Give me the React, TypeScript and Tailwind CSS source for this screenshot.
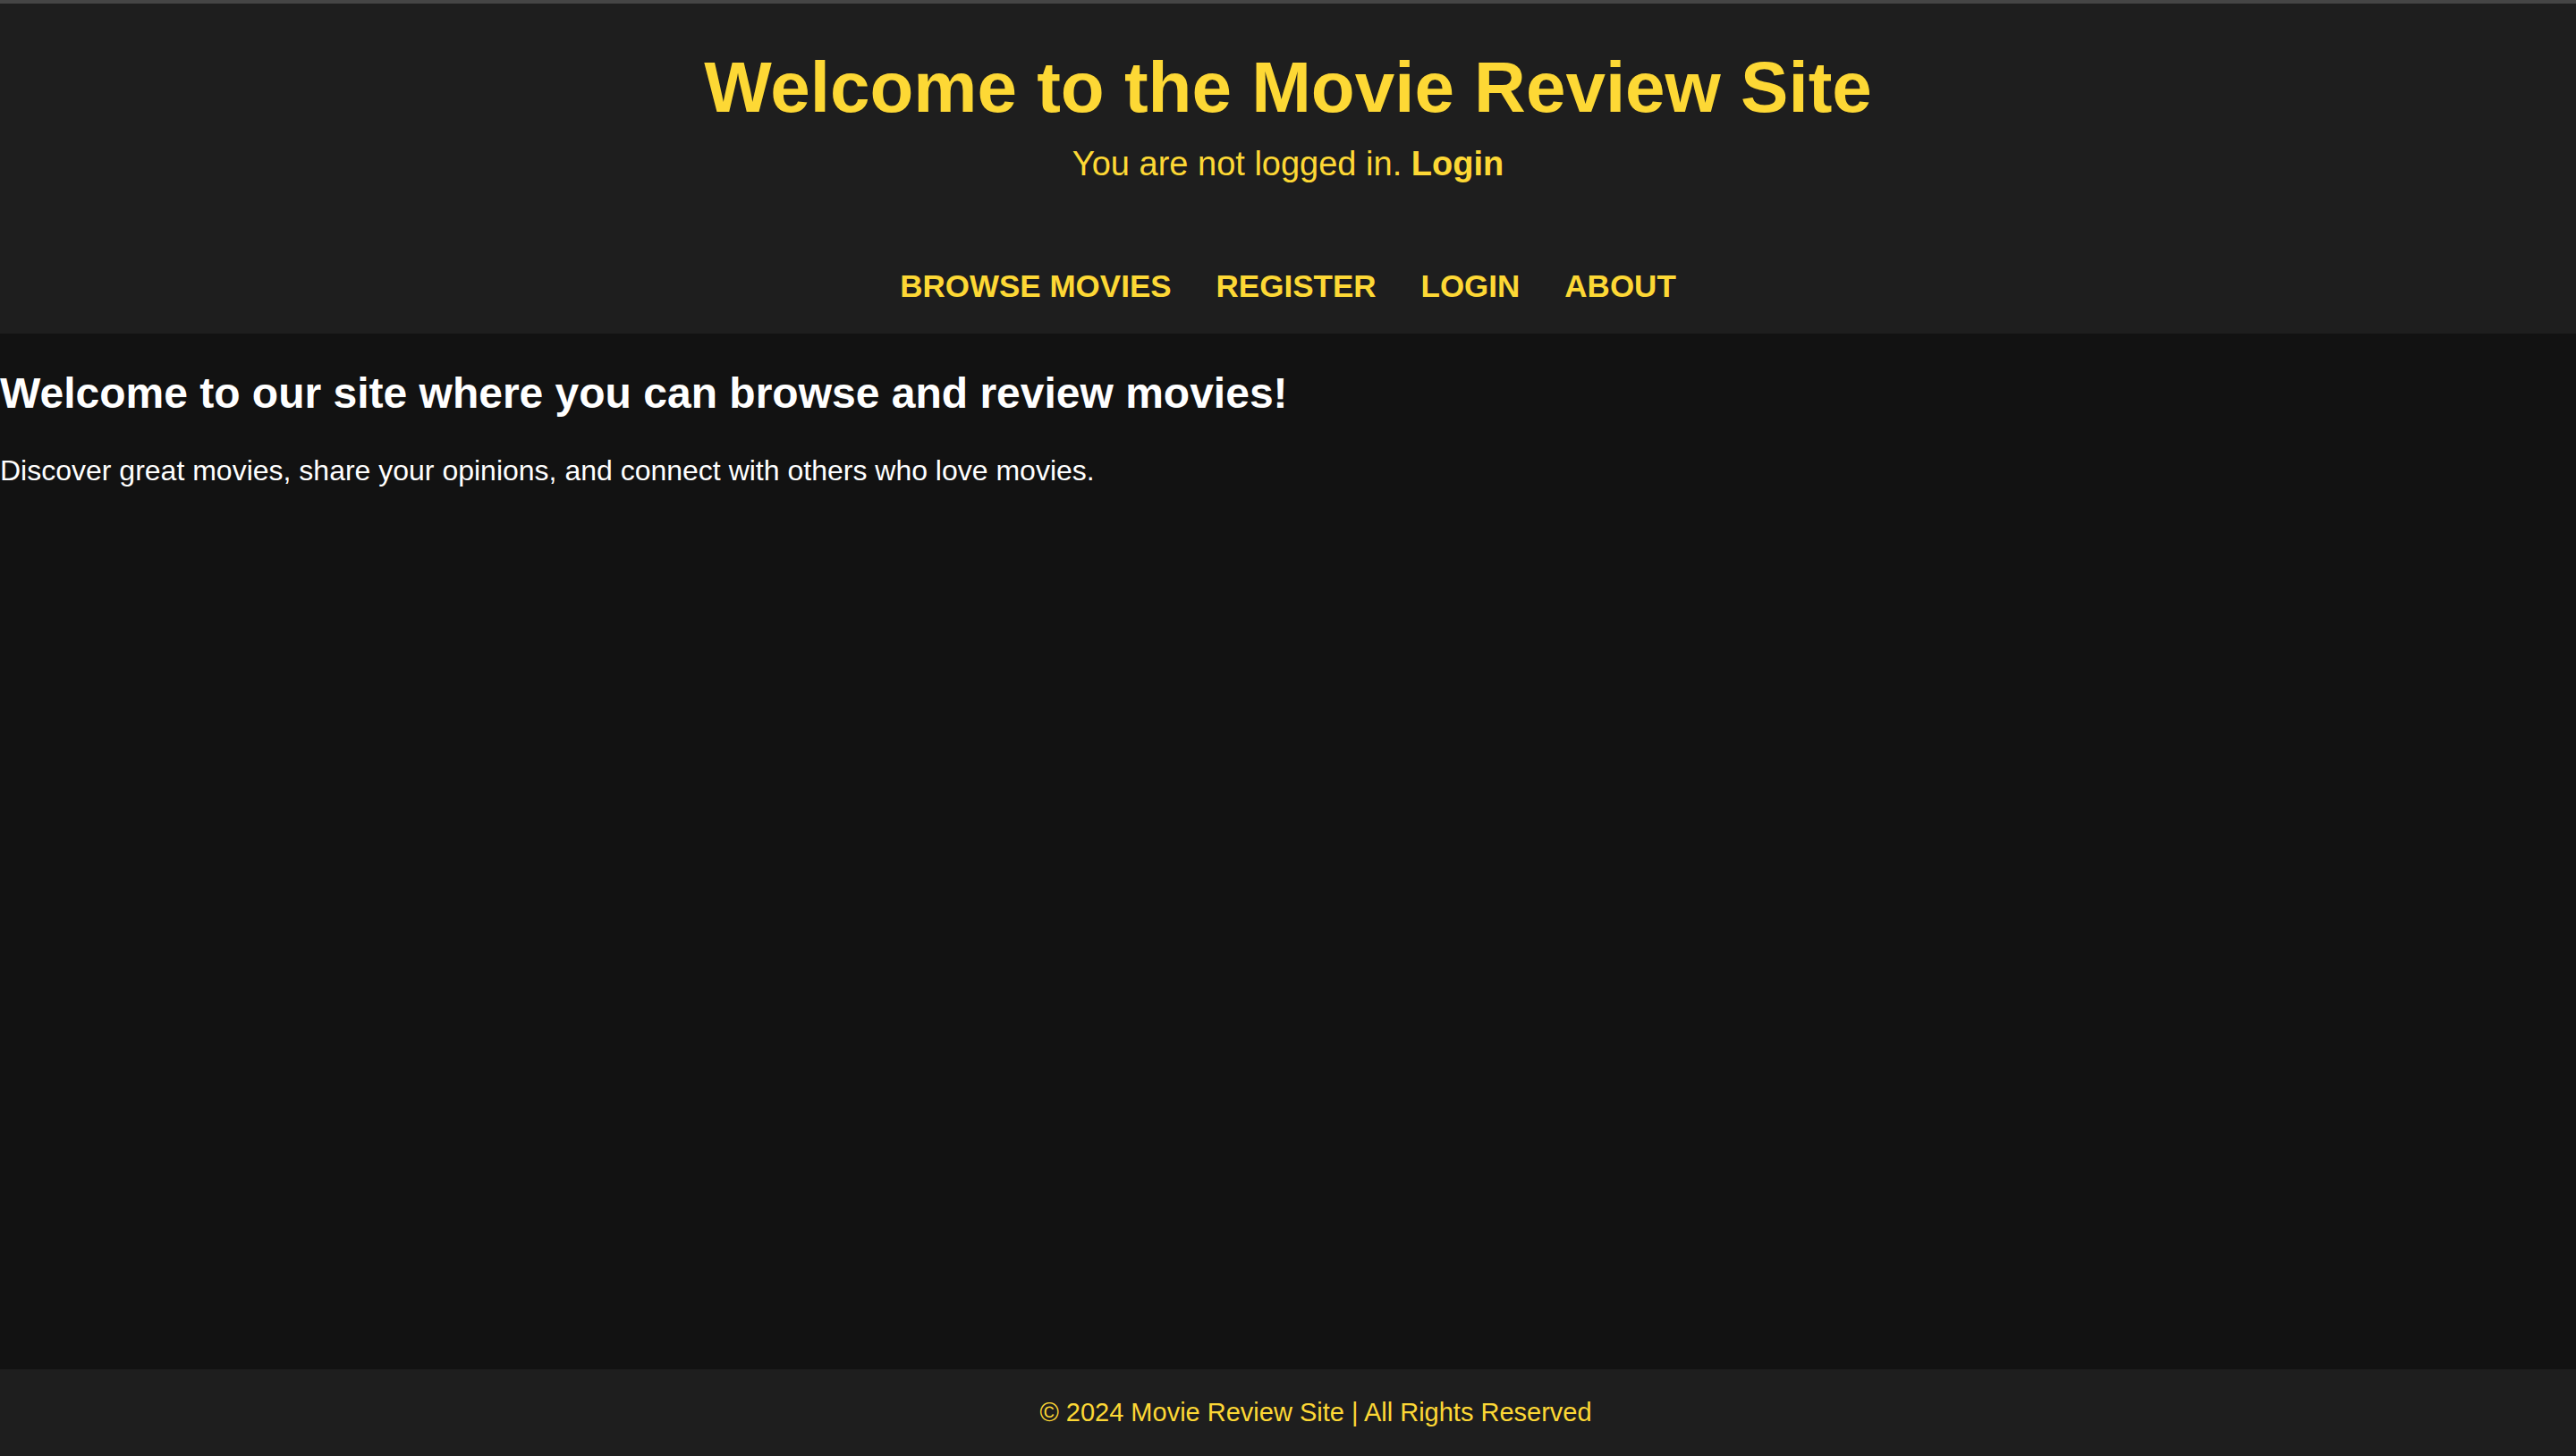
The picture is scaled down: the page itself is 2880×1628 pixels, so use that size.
import React from "react";

export default function App() {
  const font = { fontFamily: '"Liberation Sans", Arial, Helvetica, sans-serif' };
  return (
    <div className="min-h-screen flex flex-col bg-[#121212]" style={font}>
      <div className="h-[4px] bg-[#454545]" />
      <header className="bg-[#1e1e1e] flex flex-col items-center pt-[46px] pb-[33px]">
        <h1 className="text-[80px] leading-[96px] font-bold text-[#fdd835]">
          Welcome to the Movie Review Site
        </h1>
        <p className="mt-[17px] text-[38px] leading-[40px] text-[#fdd835]">
          You are not logged in. <a className="font-bold">Login</a>
        </p>
        <nav className="mt-[97px] flex gap-[50px] text-[35px] leading-[40px] font-bold uppercase text-[#fdd835]">
          <a>Browse Movies</a>
          <a>Register</a>
          <a>Login</a>
          <a>About</a>
        </nav>
      </header>
      <main className="flex-1 pt-[39px]">
        <h2 className="text-[48px] leading-[56px] font-bold text-white">
          Welcome to our site where you can browse and review movies!
        </h2>
        <p className="mt-[40px] text-[32px] leading-[36px] text-white">
          Discover great movies, share your opinions, and connect with others who love movies.
        </p>
      </main>
      <footer className="bg-[#1e1e1e] pt-[32px] pb-[33px] pl-[62px] text-center text-[29px] leading-[32px] text-[#fdd835]">
        © 2024 Movie Review Site | All Rights Reserved
      </footer>
    </div>
  );
}
